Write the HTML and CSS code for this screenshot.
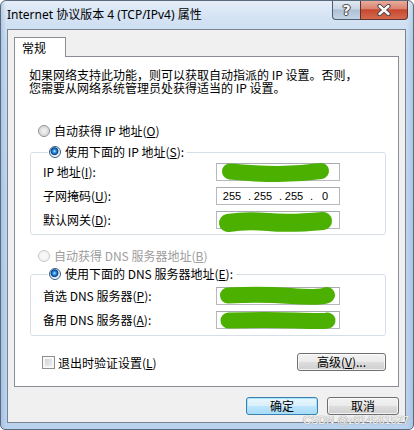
FILE: index.html
```html
<!DOCTYPE html>
<html lang="zh-CN">
<head>
<meta charset="utf-8">
<title>Internet 协议版本 4 (TCP/IPv4) 属性</title>
<link rel="stylesheet" href="styles.css">
</head>
<body>
<div class="window">
  <div class="titlebar">
    <div class="title">Internet 协议版本 4 (TCP/IPv4) 属性</div>
    <div class="caption-btns">
      <div class="cap help">?</div>
      <div class="cap close">
        <svg width="14" height="12" viewBox="0 0 14 12">
          <path d="M2.5 2 L11.5 10 M11.5 2 L2.5 10" stroke="#3a3f48" stroke-width="4.2" stroke-linecap="round"/>
          <path d="M2.5 2 L11.5 10 M11.5 2 L2.5 10" stroke="#ffffff" stroke-width="2.4" stroke-linecap="round"/>
        </svg>
      </div>
    </div>
  </div>
  <div class="client">
    <div class="tabs"><div class="tab">常规</div></div>
    <div class="panel">
      <div class="intro">
        <div class="intro-line">如果网络支持此功能，则可以获取自动指派的 IP 设置。否则，</div>
        <div class="intro-line">您需要从网络系统管理员处获得适当的 IP 设置。</div>
      </div>
      <div class="opt first"><span class="radio"></span><span>自动获得 IP 地址(<u>O</u>)</span></div>
      <fieldset class="group g-ip">
        <legend><span class="legend-inner"><span class="radio checked"></span><span>使用下面的 IP 地址(<u>S</u>):</span></span></legend>
        <div class="rows">
          <span class="lbl">IP 地址(<u>I</u>):</span>
          <div class="ipbox">
            <svg class="redact" width="124" height="18" viewBox="0 0 124 18"><path d="M14 8.5 Q 40 11 62 11 T 105 8" /></svg>
          </div>
          <span class="lbl">子网掩码(<u>U</u>):</span>
          <div class="ipbox"><div class="ipval"><span class="seg">255</span><span class="dot">.</span><span class="seg">255</span><span class="dot">.</span><span class="seg">255</span><span class="dot">.</span><span class="seg">0</span></div></div>
          <span class="lbl">默认网关(<u>D</u>):</span>
          <div class="ipbox">
            <svg class="redact thick" width="124" height="18" viewBox="0 0 124 18"><path d="M12 12 Q 30 9 52 11 T 107 10" /></svg>
          </div>
        </div>
      </fieldset>
      <div class="opt disabled"><span class="radio"></span><span>自动获得 DNS 服务器地址(<u>B</u>)</span></div>
      <fieldset class="group g-dns">
        <legend><span class="legend-inner"><span class="radio checked"></span><span>使用下面的 DNS 服务器地址(<u>E</u>):</span></span></legend>
        <div class="rows">
          <span class="lbl">首选 DNS 服务器(<u>P</u>):</span>
          <div class="ipbox">
            <svg class="redact" width="124" height="18" viewBox="0 0 124 18"><path d="M12 8.5 Q 45 7 75 9 T 111 8" /></svg>
          </div>
          <span class="lbl">备用 DNS 服务器(<u>A</u>):</span>
          <div class="ipbox">
            <svg class="redact" width="124" height="18" viewBox="0 0 124 18"><path d="M12.5 9.5 Q 50 8.5 80 9.5 T 111.5 9.5" /></svg>
          </div>
        </div>
      </fieldset>
      <div class="bottom-row">
        <div class="check-row"><span class="checkbox"></span><span>退出时验证设置(<u>L</u>)</span></div>
        <button class="btn adv">高级(<u>V</u>)...</button>
      </div>
    </div>
    <div class="dialog-btns">
      <button class="btn default">确定</button>
      <button class="btn">取消</button>
    </div>
  </div>
  <div class="watermark">CSDN @z814561527</div>
</div>
</body>
</html>
```
FILE: styles.css
```css
* { box-sizing: border-box; }
html, body { margin: 0; padding: 0; }
body {
  width: 414px;
  height: 430px;
  background: #fff;
  font-family: "Noto Sans CJK SC", "Noto Sans", sans-serif;
  font-size: 12px;
  color: #000;
  overflow: hidden;
}

.window {
  position: relative;
  width: 414px;
  height: 430px;
  border: 1px solid #5a6b7e;
  border-radius: 6px 6px 5px 5px;
  background:
    linear-gradient(90deg, rgba(150,180,215,.55) 0, rgba(150,180,215,0) 5px, rgba(150,180,215,0) 406px, rgba(150,180,215,.45) 412px),
    linear-gradient(180deg, #e6eef8 0, #d6e4f4 14px, #c6dbf1 40px, #bcd4ef 200px, #b9d2ee 430px);
  display: flex;
  flex-direction: column;
  overflow: hidden;
}

.titlebar {
  flex: none;
  height: 28px;
  display: flex;
  justify-content: space-between;
  align-items: flex-start;
}
.title {
  padding: 7px 0 0 6px;
  line-height: 14px;
  font-family: "Noto Sans", "Noto Sans CJK SC", sans-serif;
  font-size: 12px;
  color: #000;
  white-space: nowrap;
}
.caption-btns {
  display: flex;
  margin: -1px 5px 0 0;
  height: 20px;
}
.cap {
  height: 20px;
  display: flex;
  align-items: center;
  justify-content: center;
  border: 1px solid #4d5d70;
  border-top: none;
}
.help {
  width: 28px;
  border-right: none;
  border-radius: 0 0 0 4px;
  background: linear-gradient(180deg, #e3ebf4 0, #c9d6e5 48%, #aebfd3 52%, #c5d5e7 100%);
  color: #fff;
  font-family: "DejaVu Sans", sans-serif;
  font-weight: bold;
  font-size: 14px;
  line-height: 18px;
  text-shadow: 0 0 1px #333, 0 0 1px #333, 1px 0 0 #555, -1px 0 0 #555, 0 1px 0 #555, 0 -1px 0 #555;
}
.close {
  width: 48px;
  border-radius: 0 0 4px 0;
  border-color: #5e3430;
  background: linear-gradient(180deg, #eab1a3 0, #d98570 45%, #c7482f 52%, #d46a4f 100%);
}

.client {
  flex: none;
  margin: 0 7px 0 6px;
  height: 394px;
  border: 1px solid #7a838e;
  background: #f0f0f0;
  padding: 7px 6px 0 6px;
  display: flex;
  flex-direction: column;
}

.tabs {
  display: flex;
  height: 19px;
  position: relative;
  z-index: 1;
}
.tab {
  width: 52px;
  height: 20px;
  border: 1px solid #898c95;
  border-bottom: none;
  background: #fff;
  padding-left: 7px;
  line-height: 19px;
}

.panel {
  height: 331px;
  border: 1px solid #898c95;
  background: #fff;
}

.intro {
  padding: 11px 0 0 14px;
}
.intro-line {
  height: 13px;
  line-height: 13px;
  white-space: nowrap;
}

.opt {
  display: flex;
  align-items: center;
  gap: 4px;
  height: 16px;
  line-height: 16px;
  padding-left: 23px;
  white-space: nowrap;
}
.opt.first { margin-top: 29px; }
.opt.disabled { margin-top: 13px; color: #9d9d9d; }
.opt.disabled .radio { border-color: #c8c8c8; background: radial-gradient(circle, #fafafa 0, #f1f1f1 6px); }

.radio {
  flex: none;
  width: 12px;
  height: 12px;
  border-radius: 50%;
  border: 1px solid #8a8c8e;
  background: radial-gradient(circle at 50% 50%, #f4f4f4 0, #e4e4e4 3px, #d9d9d9 4px, #f6f6f6 6px);
}
.radio.checked {
  border-color: #2c628b;
  background: radial-gradient(circle at 45% 42%, #c8f0ff 0, #3ea2ec 1.3px, #1767c0 2.6px, #0b3f86 3.4px, #6f8eb0 3.9px, #e6e6e6 4.3px, #fbfbfb 6px);
}

.group {
  margin: 5px 12px 0 15px;
  padding: 3px 0 5px 12px;
  border: 1px solid #d5dfe5;
  border-radius: 3px;
  min-width: 0;
}
.g-dns {
  margin-top: 2px;
  padding-top: 5px;
  padding-bottom: 6px;
}
.group legend {
  margin-left: 5px;
  padding: 0 3px 0 1px;
  height: 16px;
  line-height: 16px;
}
.legend-inner {
  display: inline-flex;
  align-items: center;
  gap: 4px;
  height: 16px;
  white-space: nowrap;
}

.rows {
  display: grid;
  grid-template-columns: 173px 124px;
  row-gap: 6px;
  align-items: center;
}
.lbl {
  line-height: 18px;
  white-space: nowrap;
}
.ipbox {
  position: relative;
  height: 18px;
  border: 1px solid #b6b9bf;
  border-top-color: #a8abb2;
  background: #fff;
}
.ipval {
  display: flex;
  height: 100%;
  align-items: center;
  padding-left: 3px;
  font-family: "Liberation Sans", "DejaVu Sans", sans-serif;
  font-size: 11px;
  line-height: 16px;
}
.seg { width: 24px; text-align: center; }
.dot { width: 7px; text-align: right; }

.redact {
  position: absolute;
  left: -1px;
  top: -1px;
  overflow: visible;
  fill: none;
  stroke: #4cb000;
  stroke-width: 16;
  stroke-linecap: round;
  filter: blur(0.4px);
}
.redact.thick { stroke-width: 18; }

.bottom-row {
  display: flex;
  justify-content: space-between;
  align-items: center;
  height: 18px;
  margin: 17px 12px 0 27px;
}
.check-row {
  display: flex;
  align-items: center;
  gap: 3px;
  white-space: nowrap;
}
.checkbox {
  flex: none;
  width: 13px;
  height: 13px;
  border: 1px solid #8e8f8f;
  background: linear-gradient(135deg, #c9ccd1 0, #f6f6f6 100%);
  box-shadow: inset 0 0 0 2px #f7f7f7;
}

.btn {
  height: 18px;
  padding: 0;
  border: 1px solid #707070;
  border-radius: 3px;
  background: linear-gradient(180deg, #f2f2f2 0, #ebebeb 48%, #dddddd 52%, #cfcfcf 100%);
  box-shadow: inset 0 0 0 1px rgba(255,255,255,.7);
  font-family: "Noto Sans CJK SC", "Noto Sans", sans-serif;
  font-size: 12px;
  line-height: 16px;
  color: #000;
  text-align: center;
  width: 72px;
}
.btn.adv { width: 89px; }
.btn.default {
  border-color: #3c7fb1;
  background: linear-gradient(180deg, #eaf6fd 0, #d9f0fc 48%, #bee6fd 52%, #a7d9f5 100%);
  box-shadow: inset 0 0 0 1px rgba(160,225,250,.9);
}

.dialog-btns {
  display: flex;
  justify-content: flex-end;
  gap: 9px;
  margin-top: 10px;
}

.watermark {
  position: absolute;
  right: 4px;
  bottom: 3px;
  font-family: "Liberation Sans", sans-serif;
  font-size: 11px;
  line-height: 12px;
  color: #f4f4f4;
  text-shadow: 0 0 1px #9a9a9a, 0 0 1px #9a9a9a;
  white-space: nowrap;
}
```
